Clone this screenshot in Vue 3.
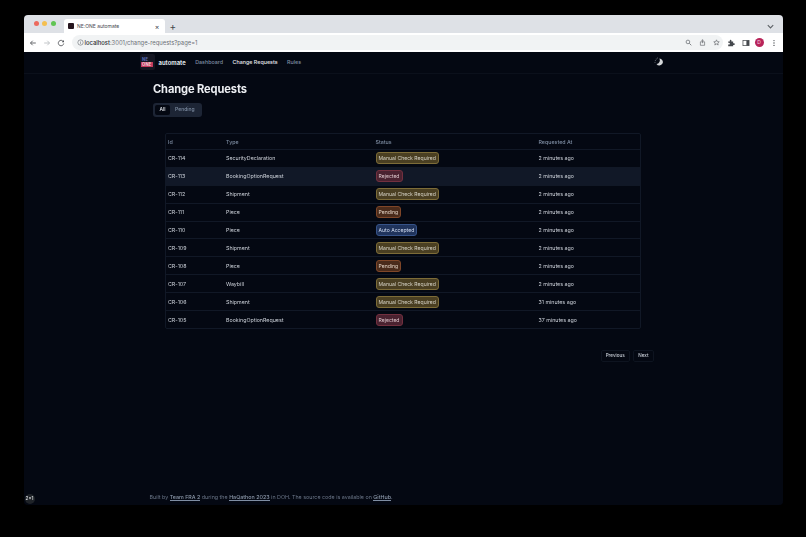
<script setup>
const rows = [
  { id: 'CR-114', type: 'SecurityDeclaration', status: 'Manual Check Required', kind: 'manual', at: '2 minutes ago' },
  { id: 'CR-113', type: 'BookingOptionRequest', status: 'Rejected', kind: 'rejected', at: '2 minutes ago', hover: true },
  { id: 'CR-112', type: 'Shipment', status: 'Manual Check Required', kind: 'manual', at: '2 minutes ago' },
  { id: 'CR-111', type: 'Piece', status: 'Pending', kind: 'pending', at: '2 minutes ago' },
  { id: 'CR-110', type: 'Piece', status: 'Auto Accepted', kind: 'accepted', at: '2 minutes ago' },
  { id: 'CR-109', type: 'Shipment', status: 'Manual Check Required', kind: 'manual', at: '2 minutes ago' },
  { id: 'CR-108', type: 'Piece', status: 'Pending', kind: 'pending', at: '2 minutes ago' },
  { id: 'CR-107', type: 'Waybill', status: 'Manual Check Required', kind: 'manual', at: '2 minutes ago' },
  { id: 'CR-106', type: 'Shipment', status: 'Manual Check Required', kind: 'manual', at: '31 minutes ago' },
  { id: 'CR-105', type: 'BookingOptionRequest', status: 'Rejected', kind: 'rejected', at: '37 minutes ago' },
]
</script>

<template>
  <div class="desktop">
    <div class="window">
      <div class="tabstrip">
        <div class="lights">
          <span class="light red"></span>
          <span class="light yellow"></span>
          <span class="light green"></span>
        </div>
        <div class="tab">
          <span class="favicon"></span>
          <span class="tab-title">NE:ONE automate</span>
          <span class="tab-close">×</span>
        </div>
        <span class="new-tab">+</span>
        <svg class="chevron" viewBox="0 0 10 10"><path d="M2 3.5 5 6.5 8 3.5" fill="none" stroke="#5f6368" stroke-width="1.3"/></svg>
      </div>
      <div class="toolbar">
        <svg class="tool" viewBox="0 0 10 10"><path d="M8.5 5H2M4.6 2.2 1.8 5l2.8 2.8" fill="none" stroke="#45484d" stroke-width="1"/></svg>
        <svg class="tool" viewBox="0 0 10 10"><path d="M1.5 5H8M5.4 2.2 8.2 5 5.4 7.8" fill="none" stroke="#b4b7bb" stroke-width="1"/></svg>
        <svg class="tool" viewBox="0 0 10 10"><path d="M8 3.4A3.4 3.4 0 1 0 8.4 5.6" fill="none" stroke="#45484d" stroke-width="1"/><path d="M8.6 1.4V4H6z" fill="#45484d"/></svg>
        <div class="omnibox">
          <svg class="info" viewBox="0 0 10 10"><circle cx="5" cy="5" r="3.8" fill="none" stroke="#5f6368" stroke-width=".8"/><path d="M5 4.4v2.6M5 2.8v.8" stroke="#5f6368" stroke-width=".8"/></svg>
          <span class="url"><b>localhost</b>:3001/change-requests?page=1</span>
          <span class="omni-spacer"></span>
          <svg class="omni-icon" viewBox="0 0 10 10"><circle cx="4.2" cy="4.2" r="2.6" fill="none" stroke="#5f6368" stroke-width="1"/><path d="M6.2 6.2 9 9" stroke="#5f6368" stroke-width="1.1"/></svg>
          <svg class="omni-icon" viewBox="0 0 10 10"><path d="M2 4h6v5H2z M5 6V1M3.6 2.4 5 1l1.4 1.4" fill="none" stroke="#5f6368" stroke-width=".9"/></svg>
          <svg class="omni-icon" viewBox="0 0 10 10"><path d="M5 1.2 6.1 3.8 8.9 4 6.8 5.8 7.4 8.6 5 7.1 2.6 8.6 3.2 5.8 1.1 4 3.9 3.8Z" fill="none" stroke="#5f6368" stroke-width=".9"/></svg>
        </div>
        <svg class="tool ext" viewBox="0 0 10 10"><path d="M1.5 3.2h2V2a1 1 0 0 1 2 0v1.2h2.2v2.1h1a1.1 1.1 0 0 1 0 2.2h-1v1.7H1.5V7h1a1.1 1.1 0 0 0 0-2.2h-1z" fill="#45484d"/></svg>
        <svg class="tool side" viewBox="0 0 10 10"><rect x="1.2" y="1.7" width="7.6" height="6.6" fill="none" stroke="#45484d" stroke-width=".9"/><rect x="5.5" y="1.7" width="3.3" height="6.6" fill="#45484d"/></svg>
        <span class="avatar">D</span>
        <svg class="tool dots" viewBox="0 0 10 10"><circle cx="5" cy="2" r=".8" fill="#45484d"/><circle cx="5" cy="5" r=".8" fill="#45484d"/><circle cx="5" cy="8" r=".8" fill="#45484d"/></svg>
      </div>

      <div class="page">
        <header class="nav">
          <div class="nav-inner">
            <div class="logo"><span class="ne">NE</span><span class="one">ONE</span></div>
            <span class="brand">automate</span>
            <nav class="links">
              <a class="link muted">Dashboard</a>
              <a class="link current">Change Requests</a>
              <a class="link muted">Rules</a>
            </nav>
            <span class="nav-spacer"></span>
            <svg class="theme" viewBox="0 0 12 12">
              <path d="M6.4 1.8a4.2 4.2 0 1 1-3.4 6.6A4.4 4.4 0 0 0 6.4 1.8Z" fill="#d5d7da"/>
              <g fill="#a9adb3">
                <circle cx="2.6" cy="2.4" r=".55"/><circle cx="4.4" cy="1.2" r=".55"/><circle cx="1.5" cy="4.2" r=".55"/><circle cx="1.2" cy="6.2" r=".55"/>
              </g>
            </svg>
          </div>
        </header>

        <main class="main">
          <h1 class="title">Change Requests</h1>
          <div class="segments">
            <span class="segment active">All</span>
            <span class="segment">Pending</span>
          </div>

          <div class="table">
            <div class="row head">
              <span class="cell">Id</span>
              <span class="cell">Type</span>
              <span class="cell">Status</span>
              <span class="cell">Requested At</span>
            </div>
            <div v-for="r in rows" :key="r.id" class="row" :class="{ hover: r.hover }">
              <span class="cell">{{ r.id }}</span>
              <span class="cell">{{ r.type }}</span>
              <span class="cell"><span class="badge" :class="r.kind">{{ r.status }}</span></span>
              <span class="cell">{{ r.at }}</span>
            </div>
          </div>

          <div class="pager">
            <span class="page-btn">Previous</span>
            <span class="page-btn">Next</span>
          </div>
        </main>

        <footer class="footer">
          <span class="size-badge">2x1</span>
          <p class="credit">Built by <a>Team FRA 2</a> during the <a>HaQathon 2023</a> in DOH. The source code is available on <a>GitHub</a>.</p>
        </footer>
      </div>
    </div>
  </div>
</template>

<style>
html, body { margin: 0; background: #000; }
</style>

<style scoped>
.desktop {
  width: 806px;
  height: 537px;
  background: #000;
  padding: 15px 23px 32px 23.5px;
  box-sizing: border-box;
  font-family: Inter, "Liberation Sans", sans-serif;
  overflow: hidden;
}
.window {
  height: 100%;
  display: flex;
  flex-direction: column;
  border-radius: 4px;
  overflow: hidden;
  background: #03060f;
  filter: blur(.3px);
}
.tabstrip {
  height: 18px;
  flex: none;
  background: #dee1e6;
  display: flex;
  align-items: flex-end;
  position: relative;
}
.lights { display: flex; gap: 3.5px; align-self: center; margin: 0 0 2px 10px; }
.light { width: 5px; height: 5px; border-radius: 50%; }
.red { background: #ec6a5e; }
.yellow { background: #f4bf4f; }
.green { background: #61c554; }
.tab {
  width: 101px;
  height: 14px;
  margin-left: 8px;
  background: #fff;
  border-radius: 3px 3px 0 0;
  display: flex;
  align-items: center;
  padding: 0 5px 0 4px;
  box-sizing: border-box;
  gap: 3px;
}
.favicon { width: 6.5px; height: 6.5px; background: #26161f; border-radius: 1px; flex: none; }
.tab-title { font-size: 5px; color: #45484d; flex: 1; white-space: nowrap; }
.tab-close { font-size: 7px; color: #45484d; line-height: 1; }
.new-tab { font-size: 10px; line-height: 14px; height: 14px; color: #45484d; margin-left: 5px; }
.chevron { width: 9px; height: 9px; position: absolute; right: 8.5px; top: 7px; }
.toolbar {
  height: 19px;
  flex: none;
  background: #fff;
  display: flex;
  align-items: center;
  padding: 0 5px 0 5px;
  box-sizing: border-box;
}
.tool { width: 8px; height: 8px; flex: none; margin-right: 6px; }
.omnibox {
  height: 15px;
  width: 651px;
  margin-left: 1px;
  flex: none;
  background: #f1f3f4;
  border-radius: 8px;
  display: flex;
  align-items: center;
  padding: 0 3px 0 5px;
  box-sizing: border-box;
}
.info { width: 7px; height: 7px; flex: none; }
.url { font-size: 5.85px; color: #6b6f75; margin-left: 1px; white-space: nowrap; }
.url b { color: #2a2c30; font-weight: 500; }
.omni-spacer { flex: 1; }
.omni-icon { width: 7px; height: 7px; margin-left: 7px; flex: none; }
.ext { margin-left: 4px; margin-right: 7px; }
.side { margin-right: 5px; }
.avatar {
  width: 9px; height: 9px; border-radius: 50%;
  background: #b8245a; color: #f5d9e3;
  font-size: 5px; line-height: 9px; text-align: center; flex: none;
  margin-right: 6px;
}
.dots { margin-right: 0; }

.page {
  flex: 1;
  min-height: 0;
  display: flex;
  flex-direction: column;
  background: #040812;
  color: #e1e7ef;
}
.nav { height: 22px; flex: none; border-bottom: 1px solid #0b101b; box-sizing: border-box; }
.nav-inner {
  height: 100%;
  display: flex;
  align-items: center;
  padding: 0 119px 1px 116.5px;
  box-sizing: border-box;
}
.logo {
  width: 15px;
  height: 16px;
  flex: none;
  border-radius: 2px;
  background: #151622;
  display: flex;
  flex-direction: column;
  align-items: flex-start;
  justify-content: center;
  padding-left: 2px;
  box-sizing: border-box;
  font-size: 4.2px;
  line-height: 5px;
  font-weight: 700;
  letter-spacing: .2px;
}
.ne { color: #5a6fb8; }
.one { background: #c23a5e; color: #f0d4dc; padding: 0 1px; margin-left: -1px; }
.brand { font-size: 5.9px; font-weight: 700; color: #dfe2e8; margin-left: 3.5px; }
.links { display: flex; gap: 9.5px; margin-left: 9.5px; }
.link { font-size: 5.35px; font-weight: 500; white-space: nowrap; }
.muted { color: #7f8ea3; }
.current { color: #e6e9ee; }
.nav-spacer { flex: 1; }
.theme { width: 10px; height: 10px; flex: none; }

.main { padding-left: 129.5px; padding-right: 141.5px; flex: 1; min-height: 0; }
.title { margin: 8px 0 0; font-size: 11.1px; line-height: 15px; font-weight: 700; color: #eceef2; letter-spacing: -.1px; }
.segments {
  display: inline-flex;
  margin-top: 6px;
  padding: 2px;
  border-radius: 3px;
  background: #1d2535;
  vertical-align: top;
}
.segment {
  font-size: 5px;
  line-height: 9.5px;
  padding: 0 5px 0 5px;
  font-weight: 500;
  color: #7f8ea3;
  border-radius: 2px;
}
.segment.active { background: #040812; color: #e6e9ee; padding: 0 4.5px; }
.table {
  margin: 16.25px 0 0 11.5px;
  width: 476px;
  border: 1px solid #111826;
  border-radius: 2px;
  box-sizing: border-box;
}
.row {
  display: grid;
  grid-template-columns: 58px 149.5px 163px 1fr;
  height: 17.95px;
  align-items: center;
  padding-left: 2.5px;
  box-sizing: border-box;
  border-top: 1px solid #111826;
  font-size: 5.3px;
  color: #ccd1d9;
}
.row.head { height: 14.5px; border-top: none; color: #7f8ea3; font-weight: 500; }
.row.hover { background: #111827; }
.cell { white-space: nowrap; }
.badge {
  display: inline-block;
  font-size: 5.1px;
  line-height: 8px;
  padding: 1px 2px;
  border-radius: 3px;
  border: 1px solid;
  color: #d5d2c6;
}
.manual { background: #4a3f22; border-color: #7d6c38; }
.rejected { background: #4a2230; border-color: #72303f; color: #dfc9ce; }
.pending { background: #4a2b1b; border-color: #7f4628; color: #e2d2c4; }
.accepted { background: #20345c; border-color: #365388; color: #d1dcf0; }
.pager { display: flex; justify-content: flex-end; gap: 3.5px; margin-top: 21.25px; margin-right: -12px; }
.page-btn {
  font-size: 4.6px;
  font-weight: 500;
  line-height: 10px;
  padding: 0 4px;
  border: 1px solid #0e1420;
  border-radius: 2px;
  color: #c8ced7;
}
.footer { flex: none; height: 17px; position: relative; padding: 4.5px 0 0 126px; box-sizing: border-box; }
.credit { margin: 0; font-size: 5.35px; line-height: 8px; color: #6b7688; white-space: nowrap; }
.credit a { color: #8d99ab; font-weight: 500; border-bottom: .6px solid #7f8ea3; }
.size-badge {
  position: absolute;
  left: 1px;
  top: 6px;
  width: 10px;
  height: 10px;
  border-radius: 50%;
  background: #1f2328;
  color: #d5d7da;
  font-size: 4.6px;
  line-height: 10px;
  text-align: center;
  font-weight: 600;
}
</style>
